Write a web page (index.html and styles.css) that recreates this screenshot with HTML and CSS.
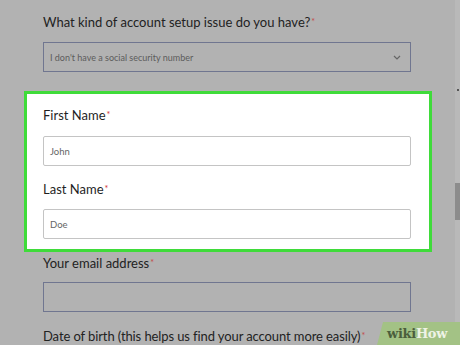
FILE: index.html
```html
<!DOCTYPE html>
<html lang="en">
<head>
  <meta charset="UTF-8" />
  <title>Account setup issue</title>
  <link rel="stylesheet" href="styles.css">
</head>
<body>
  <div class="page">
    <form class="form">
      <label class="label q1">What kind of account setup issue do you have?<span class="req">*</span></label>
      <div class="select dim">
        <span>I don't have a social security number</span>
        <svg width="8" height="5" viewBox="0 0 8 5"><path d="M1 1l3 3 3-3" fill="none" stroke="#666" stroke-width="1.2"/></svg>
      </div>

      <div class="highlight">
        <label class="label first">First Name<span class="req">*</span></label>
        <div class="input">John</div>
        <label class="label last">Last Name<span class="req">*</span></label>
        <div class="input">Doe</div>
      </div>

      <label class="label email">Your email address<span class="req">*</span></label>
      <div class="input dim"></div>
      <label class="label dob">Date of birth (this helps us find your account more easily)<span class="req">*</span></label>
    </form>

    <div class="scrollbar"><span class="arrow"></span><span class="thumb"></span></div>
    <div class="watermark"><span class="wiki">wiki</span><span class="how">How</span></div>
  </div>
</body>
</html>
```

FILE: styles.css
```css
html, body {
  margin: 0;
  height: 100%;
  overflow: hidden;
}

body {
  font-family: Lato, "Open Sans", sans-serif;
  background: #b2b2b2;
  color: #232323;
}

.page {
  position: relative;
  height: 345px;
}

.form {
  display: flex;
  flex-direction: column;
  width: 368px;
  padding: 14px 0 0 43px;
}

.label {
  display: block;
  font-size: 13px;
  line-height: 16px;
  color: #222;
}

.req {
  color: #c24a4a;
  font-size: 9px;
  vertical-align: top;
  margin-left: 1px;
}

.q1 { margin-bottom: 12px; }

.select {
  display: flex;
  align-items: center;
  justify-content: space-between;
  height: 28px;
  padding: 0 9px 0 6px;
  border: 1px solid #707690;
  font-size: 9px;
  color: #5c5c5c;
}

.highlight {
  display: flex;
  flex-direction: column;
  margin: 19px -21px 0 -19px;
  padding: 13px 18px 10px 16px;
  border: 3px solid #3fdb3a;
  background: #fff;
}

.highlight .label { color: #1f1f1f; }
.highlight .req { color: #d03030; }

.first { margin-bottom: 13px; }
.last { margin: 15px 0 12px; }

.input {
  height: 28px;
  display: flex;
  align-items: center;
  padding: 0 6px;
  border: 1px solid #c4c4c4;
  border-radius: 2px;
  font-size: 9.5px;
  color: #666;
}

.input.dim {
  border-color: #707690;
  border-radius: 0;
}

.email { margin: 3px 0 11px; }
.dob { margin-top: 16px; letter-spacing: -0.1px; }

.scrollbar {
  position: absolute;
  top: 0;
  right: 0;
  width: 5px;
  height: 100%;
  background: #b9b9b9;
}

.scrollbar .arrow {
  position: absolute;
  top: 89px;
  left: 2px;
  width: 2px;
  height: 2px;
  background: #555;
}

.scrollbar .thumb {
  position: absolute;
  top: 183px;
  left: 0;
  width: 5px;
  height: 37px;
  background: #8c8c8c;
}

.watermark {
  position: absolute;
  right: 0;
  bottom: 0;
  width: 73px;
  height: 23px;
  padding-left: 10px;
  display: flex;
  align-items: center;
  background: #a3c285;
  clip-path: polygon(6px 0, 100% 0, 100% 100%, 0 100%);
  font-family: "DejaVu Serif", serif;
  font-weight: bold;
  font-size: 13px;
  letter-spacing: -0.3px;
}

.wiki { color: #4b5e3c; }
.how { color: #eef3e6; }
```
